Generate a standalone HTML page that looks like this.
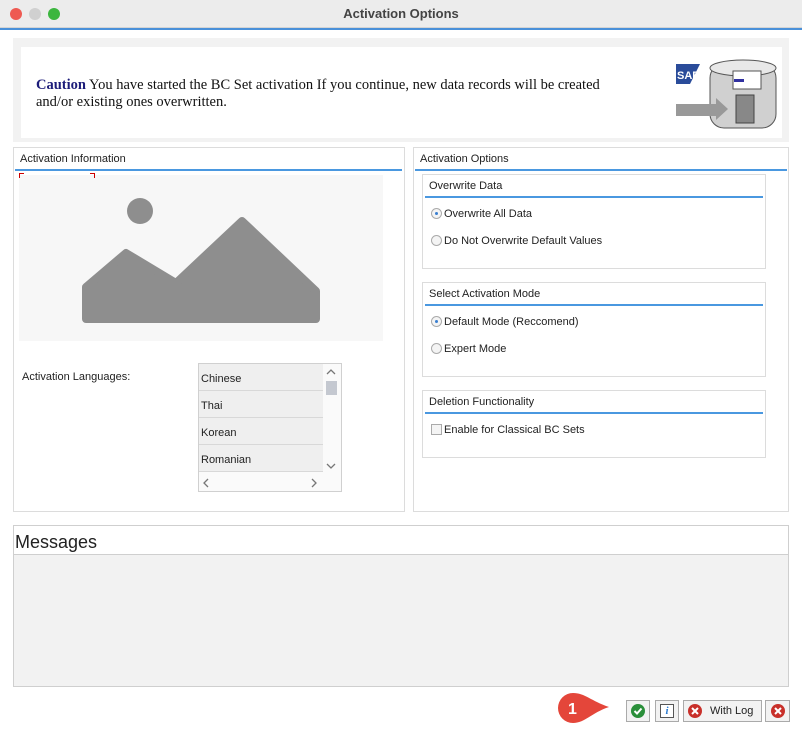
<!DOCTYPE html>
<html><head><meta charset="utf-8"><style>
*{margin:0;padding:0;box-sizing:border-box}
body{width:802px;height:732px;background:#fff;font-family:"Liberation Sans",sans-serif;font-size:11px;color:#222;position:relative;overflow:hidden}
.a{position:absolute}
.bx{position:absolute;border:1px solid #dcdcdc;background:#fff}
.bl{position:absolute;height:2px;background:#4a98e0}
.rad{display:inline-block;width:11px;height:11px;border:1px solid #aaa;border-radius:50%;background:#f4f4f4;vertical-align:-2px;margin-right:2px;position:relative}
.rad.on::after{content:"";position:absolute;left:3px;top:3px;width:3px;height:3px;border-radius:50%;background:#3a7fd0}
.btn{position:absolute;top:700px;height:22px;border:1px solid #aaa;background:#f2f2f2}
.li{position:absolute;left:199px;width:124px;height:27px;border-bottom:1px solid #d8d8d8;background:#efefef;padding:9px 0 0 2px;font-size:11px}
</style></head><body>
<div class="a" style="left:0;top:0;width:802px;height:28px;background:#ececec;border-bottom:1px solid #d4d4d4"></div>
<div class="a" style="left:10px;top:8px;width:12px;height:12px;border-radius:50%;background:#ee5a52"></div>
<div class="a" style="left:29px;top:8px;width:12px;height:12px;border-radius:50%;background:#d0d0d0"></div>
<div class="a" style="left:48px;top:8px;width:12px;height:12px;border-radius:50%;background:#3cb63f"></div>
<div class="a" style="left:0;top:6px;width:802px;text-align:center;font-weight:bold;font-size:13px;color:#444">Activation Options</div>
<div class="a" style="left:0;top:28px;width:802px;height:2px;background:#4a90d9"></div>

<div class="a" style="left:13px;top:38px;width:776px;height:104px;background:#f2f2f2"></div>
<div class="a" style="left:21px;top:47px;width:761px;height:91px;background:#fff"></div>
<div class="a" style="left:36px;top:77px;width:600px;font-family:'Liberation Serif',serif;font-size:14.5px;line-height:17px;color:#111"><b style="color:#1d1d7a">Caution</b> You have started the BC Set activation If you continue, new data records will be created and/or existing ones overwritten.</div>
<svg class="a" style="left:676px;top:56px" width="104" height="76">
<polygon points="0,8 24,8 14,28 0,28" fill="#2a4c9a"/><text x="1" y="23" font-size="11" font-weight="bold" fill="#fff" font-family="Liberation Sans">SAP</text>
<rect x="34" y="8" width="66" height="64" rx="14" fill="#d0d0d0" stroke="#555"/>
<ellipse cx="67" cy="12" rx="33" ry="8" fill="#e8e8e8" stroke="#555"/>
<rect x="57" y="15" width="28" height="18" fill="#fff" stroke="#555"/>
<rect x="58" y="23" width="10" height="3" fill="#3030a0"/>
<rect x="60" y="39" width="18" height="28" fill="#888" stroke="#444"/>
<polygon points="0,48 40,48 40,42 52,53 40,64 40,60 0,60" fill="#999"/>
</svg>

<div class="bx" style="left:13px;top:147px;width:392px;height:365px"></div>
<div class="a" style="left:20px;top:153px">Activation Information</div>
<div class="bl" style="left:15px;top:169px;width:387px"></div>
<div class="a" style="left:19px;top:175px;width:364px;height:166px;background:#f7f7f7"></div>
<div class="a" style="left:19px;top:173px;width:5px;height:5px;border-left:1px solid #c00;border-top:1px solid #c00"></div>
<div class="a" style="left:90px;top:173px;width:5px;height:5px;border-right:1px solid #c00;border-top:1px solid #c00"></div>
<svg class="a" style="left:80px;top:195px" width="242" height="130">
<circle cx="60" cy="16" r="13" fill="#8e8e8e"/>
<path d="M6,92 L6,124 L236,124 L236,96 L162,26 L96,88 L46,58 Z" fill="#8e8e8e" stroke="#8e8e8e" stroke-width="8" stroke-linejoin="round"/>
</svg>
<div class="a" style="left:22px;top:371px">Activation Languages:</div>
<div class="a" style="left:198px;top:363px;width:144px;height:129px;border:1px solid #d0d0d0;background:#fafafa"></div>
<div class="li" style="top:364px">Chinese</div>
<div class="li" style="top:391px">Thai</div>
<div class="li" style="top:418px">Korean</div>
<div class="li" style="top:445px">Romanian</div>
<svg class="a" style="left:325px;top:368px" width="12" height="8"><path d="M2,6 L6,2 L10,6" stroke="#777" stroke-width="1.3" fill="none"/></svg>
<div class="a" style="left:326px;top:381px;width:11px;height:14px;background:#c4c8d0"></div>
<svg class="a" style="left:325px;top:462px" width="12" height="8"><path d="M2,2 L6,6 L10,2" stroke="#777" stroke-width="1.3" fill="none"/></svg>
<svg class="a" style="left:202px;top:478px" width="8" height="10"><path d="M6,1 L2,5 L6,9" stroke="#777" stroke-width="1.3" fill="none"/></svg>
<svg class="a" style="left:310px;top:478px" width="8" height="10"><path d="M2,1 L6,5 L2,9" stroke="#777" stroke-width="1.3" fill="none"/></svg>

<div class="bx" style="left:413px;top:147px;width:376px;height:365px"></div>
<div class="a" style="left:420px;top:153px">Activation Options</div>
<div class="bl" style="left:415px;top:169px;width:372px"></div>

<div class="bx" style="left:422px;top:174px;width:344px;height:95px"></div>
<div class="a" style="left:429px;top:180px">Overwrite Data</div>
<div class="bl" style="left:425px;top:196px;width:338px"></div>
<div class="a" style="left:431px;top:208px"><span class="rad on"></span>Overwrite All Data</div>
<div class="a" style="left:431px;top:235px"><span class="rad"></span>Do Not Overwrite Default Values</div>

<div class="bx" style="left:422px;top:282px;width:344px;height:95px"></div>
<div class="a" style="left:429px;top:288px">Select Activation Mode</div>
<div class="bl" style="left:425px;top:304px;width:338px"></div>
<div class="a" style="left:431px;top:316px"><span class="rad on"></span>Default Mode (Reccomend)</div>
<div class="a" style="left:431px;top:343px"><span class="rad"></span>Expert Mode</div>

<div class="bx" style="left:422px;top:390px;width:344px;height:68px"></div>
<div class="a" style="left:429px;top:396px">Deletion Functionality</div>
<div class="bl" style="left:425px;top:412px;width:338px"></div>
<div class="a" style="left:431px;top:424px"><span style="display:inline-block;width:11px;height:11px;border:1px solid #aaa;background:#f4f4f4;vertical-align:-2px;margin-right:2px"></span>Enable for Classical BC Sets</div>

<div class="a" style="left:13px;top:525px;width:776px;height:162px;border:1px solid #cfcfcf;background:#f2f2f2"></div>
<div class="a" style="left:14px;top:526px;width:774px;height:29px;background:#fff;border-bottom:1px solid #cfcfcf"></div>
<div class="a" style="left:15px;top:532px;font-size:18px;color:#222">Messages</div>

<svg class="a" style="left:557px;top:691px" width="56" height="34">
<path d="M16,2 C28,2 34,10 52,16 C34,22 28,32 16,32 A15,15 0 0 1 16,2 Z" fill="#e4463a"/>
<text x="11" y="23" font-size="16" font-weight="bold" fill="#fff" font-family="Liberation Sans">1</text>
</svg>
<div class="btn" style="left:626px;width:24px"><svg width="22" height="20"><circle cx="11" cy="10" r="7" fill="#2a8f3a"/><path d="M7.5,10 L10,12.5 L14.5,7.5" stroke="#fff" stroke-width="2" fill="none"/></svg></div>
<div class="btn" style="left:655px;width:24px"><div style="margin:3px 4px;width:14px;height:14px;border:1px solid #555;background:#fff;color:#2a7ad0;font:italic bold 11px 'Liberation Serif',serif;text-align:center;line-height:13px">i</div></div>
<div class="btn" style="left:683px;width:79px"><svg class="a" style="left:3px;top:2px" width="16" height="16"><circle cx="8" cy="8" r="7" fill="#c8302a"/><path d="M5,5 L11,11 M11,5 L5,11" stroke="#fff" stroke-width="2"/></svg><span class="a" style="left:26px;top:4px">With Log</span></div>
<div class="btn" style="left:765px;width:25px"><svg class="a" style="left:4px;top:2px" width="16" height="16"><circle cx="8" cy="8" r="7" fill="#c8302a"/><path d="M5,5 L11,11 M11,5 L5,11" stroke="#fff" stroke-width="2"/></svg></div>
</body></html>
